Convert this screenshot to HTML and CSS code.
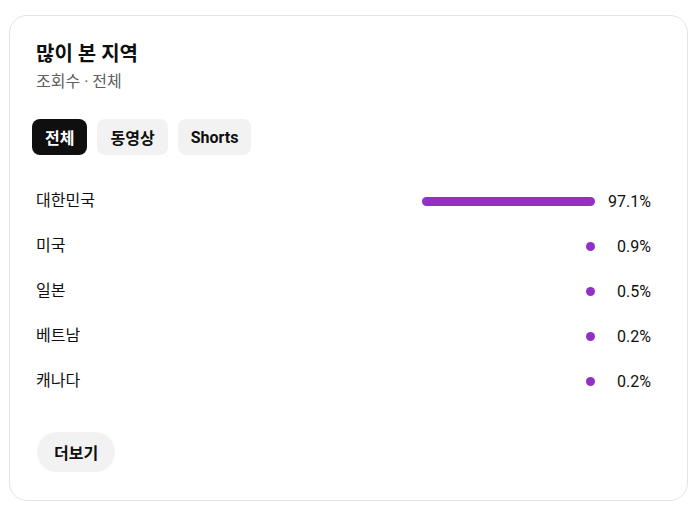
FILE: index.html
```html
<!doctype html>
<html lang="ko">
  <head>
    <meta charset="UTF-8" />
    <meta name="viewport" content="width=device-width, initial-scale=1.0" />
    <title>많이 본 지역</title>
    <link rel="stylesheet" href="styles.css">
  </head>
  <body>
    <div class="region-card">
      <div class="card-header">
        <h2 class="card-title">많이 본 지역</h2>
        <div class="card-subtitle">조회수 · 전체</div>
      </div>

      <div class="chip-row">
        <button class="chip active">전체</button>
        <button class="chip">동영상</button>
        <button class="chip">Shorts</button>
      </div>

      <div class="region-list">
        <div class="region-row">
          <span class="region-name">대한민국</span>
          <div class="bar-track"><div class="bar" style="width: 100%"></div></div>
          <span class="region-value">97.1%</span>
        </div>
        <div class="region-row">
          <span class="region-name">미국</span>
          <div class="bar-track"><div class="bar" style="width: 0.9%"></div></div>
          <span class="region-value">0.9%</span>
        </div>
        <div class="region-row">
          <span class="region-name">일본</span>
          <div class="bar-track"><div class="bar" style="width: 0.5%"></div></div>
          <span class="region-value">0.5%</span>
        </div>
        <div class="region-row">
          <span class="region-name">베트남</span>
          <div class="bar-track"><div class="bar" style="width: 0.2%"></div></div>
          <span class="region-value">0.2%</span>
        </div>
        <div class="region-row">
          <span class="region-name">캐나다</span>
          <div class="bar-track"><div class="bar" style="width: 0.2%"></div></div>
          <span class="region-value">0.2%</span>
        </div>
      </div>

      <button class="more-button">더보기</button>
    </div>
  </body>
</html>
```

FILE: styles.css
```css
body {
  margin: 0;
  background-color: #fff;
  font-family: Roboto, "Noto Sans CJK KR", sans-serif;
  color: #0f0f0f;
}

.region-card {
  box-sizing: border-box;
  width: 679px;
  height: 486px;
  margin: 15px 0 0 9px;
  border: 1px solid #e3e3e3;
  border-radius: 18px;
  padding: 24px 22px 0 22px;
  display: flex;
  flex-direction: column;
}

.card-header {
  padding-left: 4px;
}

.card-title {
  margin: 0;
  font-size: 20px;
  font-weight: 700;
  line-height: 28px;
}

.card-subtitle {
  margin-top: 3px;
  font-size: 16px;
  line-height: 22px;
  color: #606060;
}

.chip-row {
  display: flex;
  gap: 10px;
  margin-top: 26px;
}

.chip {
  height: 36px;
  padding: 0 13px;
  border: none;
  border-radius: 8px;
  background-color: #f2f2f2;
  color: #0f0f0f;
  font-family: Roboto, "Noto Sans CJK KR", sans-serif;
  font-size: 16px;
  font-weight: 700;
  cursor: pointer;
}

.chip.active {
  background-color: #0f0f0f;
  color: #fff;
}

.region-list {
  display: flex;
  flex-direction: column;
  margin-top: 24px;
}

.region-row {
  display: flex;
  align-items: center;
  height: 45px;
  padding: 0 14px 0 4px;
}

.region-name {
  flex: 1;
  font-size: 16px;
  line-height: 20px;
  padding-bottom: 1px;
}

.bar-track {
  width: 173px;
  display: flex;
  justify-content: flex-end;
}

.bar {
  height: 9px;
  min-width: 9px;
  border-radius: 5px;
  background-color: #9130c4;
}

.region-value {
  width: 56px;
  text-align: right;
  font-size: 16px;
}

.more-button {
  align-self: flex-start;
  margin: 28px 0 0 5px;
  height: 40px;
  padding: 0 17px;
  border: none;
  border-radius: 20px;
  background-color: #f2f2f2;
  color: #0f0f0f;
  font-family: Roboto, "Noto Sans CJK KR", sans-serif;
  font-size: 16px;
  font-weight: 700;
  cursor: pointer;
}
```
